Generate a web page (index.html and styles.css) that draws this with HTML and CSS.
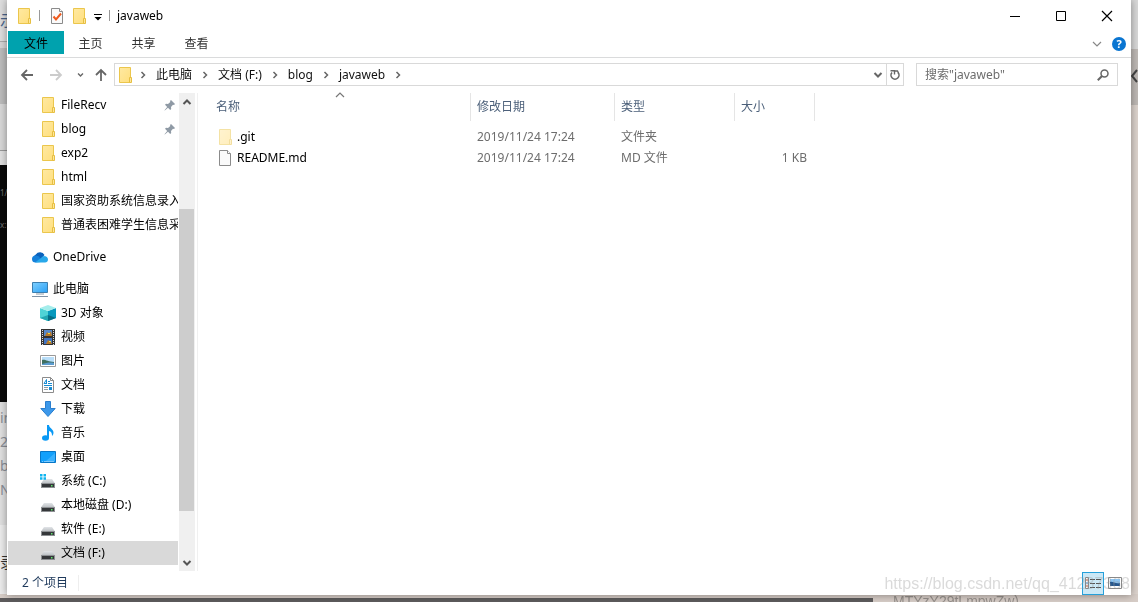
FILE: index.html
```html
<!DOCTYPE html>
<html lang="zh-CN">
<head>
<meta charset="utf-8">
<title>javaweb</title>
<meta name="viewport" content="width=device-width, initial-scale=1">
<link rel="stylesheet" href="styles.css">
</head>
<body>
<svg class="defs" aria-hidden="true">
  <defs>
    <linearGradient id="gf" x1="0" y1="0" x2="1" y2="1"><stop offset="0" stop-color="#ffe9a2"/><stop offset="1" stop-color="#ffdf7d"/></linearGradient>
    <linearGradient id="gs" x1="0" y1="0" x2="1" y2="1"><stop offset="0" stop-color="#7fd0ff"/><stop offset="1" stop-color="#2aa0f5"/></linearGradient>
    <linearGradient id="gd" x1="0" y1="0" x2="0" y2="1"><stop offset="0" stop-color="#e2e5e8"/><stop offset="1" stop-color="#b9bdc1"/></linearGradient>
    <symbol id="folder" viewBox="0 0 16 16"><path d="M2.500.5h11v15h-11z" fill="url(#gf)" stroke="#ebc64c"/><path d="M12.500 15.500v-5h2v5z" fill="#ffe69a" stroke="#e6bf42"/></symbol>
    <symbol id="file" viewBox="0 0 16 16"><path d="M2.500.5h8l3 3v12h-11z" fill="#fafafa" stroke="#8b8b8b"/><path d="M10.500.5v3h3" fill="#fff" stroke="#8b8b8b"/></symbol>
    <symbol id="check" viewBox="0 0 16 16"><use href="#file"/><path d="M4.500 8.500l2.500 3 5-6" fill="none" stroke="#ee5a1e" stroke-width="2"/></symbol>
    <symbol id="pin" viewBox="0 0 12 12"><path d="M7 1l4 4-1 1-1-.3-2 2.300.2 2-1 1L4 8.800.8 11.500.5 11.200 3.200 8 1 5.800l1-1 2 .2L6.300 3 6 2z" fill="#8f9aa5"/></symbol>
    <symbol id="cloud" viewBox="0 0 16 16"><path d="M3 12a4 4 0 0 1 .8-6.500A5 5 0 0 1 12.500 6L8 11z" fill="#0a62bd"/><path d="M3.500 13.500a3.500 3.500 0 0 1 0-7c1.500 0 2.500.5 4 1.500L9 13z" fill="#1580da"/><path d="M3 13.500L11.500 7c3 .2 4.500 1.500 4.500 3.500s-1.300 3-3 3z" fill="#28a8ea"/></symbol>
    <symbol id="pc" viewBox="0 0 16 16"><path d="M.5 1.500h15v10H.5z" fill="url(#gs)" stroke="#3b7fb0"/><path d="M4 13h8" stroke="#8c9aa8"/><path d="M0 15.500h16" stroke="#8093a6"/></symbol>
    <symbol id="cube" viewBox="0 0 16 16"><path d="M0 3l8 3v10l-8-3z" fill="#4fd3d6"/><path d="M16 3L8 6v10l8-3z" fill="#0799bd"/><path d="M0 3l8-3 8 3-8 3z" fill="#a5edeb"/><path d="M0 13l8-3v6z" fill="#22a7b2"/><path d="M8 10l8 3-8 3z" fill="#056f86"/></symbol>
    <symbol id="film" viewBox="0 0 16 16"><path d="M1 0h14v16H1z" fill="#333"/><path d="M4 1h8v6H4z" fill="#5689cc"/><path d="M4 9h8v6H4z" fill="#4274c0"/><path d="M5 7l2-4 2 2 2-3 1 5zM6 15l2-4 3 2 1 2z" fill="#b87928"/><path d="M8 4h2v1H8zM9 12h2v1H9z" fill="#eedc41"/><path d="M2.500 1v15M13.500 1v15" stroke="#ddd" stroke-dasharray="1 1"/></symbol>
    <symbol id="image" viewBox="0 0 16 16"><path d="M.5 2.500h15v11H.5z" fill="#fff" stroke="#999"/><path d="M2 4h12v8H2z" fill="#b9def9"/><path d="M2 7c3-1 6 2 12 2v2H2z" fill="#3f6f60"/><path d="M2 11c4-1 8-2 12-1v2H2z" fill="#5b9bd0"/></symbol>
    <symbol id="doc" viewBox="0 0 16 16"><path d="M2.500.5h8l3 3v12h-11z" fill="#fff" stroke="#8b8b8b"/><path d="M10.500.5v3h3" fill="none" stroke="#8b8b8b"/><path d="M4 6.500l2.500-4v4M4 6.500h3M4 8.500h8M8 4.500h2M8 6.500h4" fill="none" stroke="#188bd2"/><path d="M4 10.500h4M4 12.500h4" stroke="#929da5"/><path d="M9 10h3v3H9z" fill="#188bd2"/></symbol>
    <symbol id="down" viewBox="0 0 16 16"><path d="M5.500.5h5v7h4.700L8 15.500.8 7.500h4.700z" fill="#3c98ea" stroke="#2b7fce"/></symbol>
    <symbol id="note" viewBox="0 0 16 16"><ellipse cx="5.500" cy="13" rx="3.500" ry="2.700" fill="#0a99f5"/><path d="M7 0h2c0 3 4.500 4 4.500 7.500 0 1.500-.5 2.500-1.500 3.500.2-3-1-4.500-3-5v7H7z" fill="#0a99f5"/></symbol>
    <symbol id="desk" viewBox="0 0 16 16"><path d="M.5 2.500h15v11H.5z" fill="#12a0fb" stroke="#0876c6"/><path d="M6 12L15 4v8z" fill="#39b1ff"/><path d="M2 12.500h1M4 12.500h10" stroke="#7cc8fb"/></symbol>
    <symbol id="drive" viewBox="0 0 16 16"><path d="M4 6h8l3 4.500H1z" fill="url(#gd)"/><path d="M1 10h14v5H1z" fill="#8d9093"/><path d="M2 11h12v3H2z" fill="#35373a"/><path d="M11 12h1.500v1.500H11z" fill="#5fe36b"/></symbol>
    <symbol id="sysdrive" viewBox="0 0 16 16"><use href="#drive"/><path d="M0 1h2.500v2.500H0zM3.500 1H6v2.500H3.500zM0 4.300h2.500v2.500H0zM3.500 4.300H6v2.500H3.500z" fill="#10b4ef"/></symbol>
    <symbol id="chev" viewBox="0 0 10 10"><path d="M3.500 2l3 3-3 3" fill="none" stroke="currentColor" stroke-width="1.500"/></symbol>
    <symbol id="vee" viewBox="0 0 10 10"><path d="M1.500 3L5 6.500 8.500 3" fill="none" stroke="currentColor" stroke-width="2"/></symbol>
    <symbol id="thinvee" viewBox="0 0 10 10"><path d="M1 3l4 4 4-4" fill="none" stroke="currentColor" stroke-width="1.200"/></symbol>
    <symbol id="arrow" viewBox="0 0 14 14"><path d="M13 7H2M7 2L2 7l5 5" fill="none" stroke="currentColor" stroke-width="1.800"/></symbol>
  </defs>
</svg>

<div class="desktop" aria-hidden="true">
  <div class="behind-left">
    <span class="frag frag-top">示</span>
    <div class="terminal"><span>1/</span><span>x:</span></div>
    <div class="page-text"><span>in</span><span>2</span><span>be</span><span>Nz</span></div>
    <span class="frag frag-low">录</span>
  </div>
  <div class="behind-right"><div class="pull"><svg viewBox="0 0 8 14"><path d="M7 1L2 7l5 6" fill="none" stroke="#444" stroke-width="2"/></svg></div></div>
  <div class="behind-bottom"><span class="bar"></span><span class="code">MTYzY29tLmpwZw)</span></div>
</div>

<main class="window">
  <header class="titlebar">
    <svg class="icon"><use href="#folder"/></svg>
    <span class="rule"></span>
    <button class="quick" aria-label="属性"><svg class="icon"><use href="#check"/></svg></button>
    <button class="quick" aria-label="新建文件夹"><svg class="icon"><use href="#folder"/></svg></button>
    <button class="more" aria-label="自定义快速访问工具栏"><svg viewBox="0 0 8 8"><path d="M0 1.500h8" stroke="#000"/><path d="M.5 4h7L4 7.500z"/></svg></button>
    <span class="rule rule-last"></span>
    <h1 class="title">javaweb</h1>
    <div class="controls">
      <button aria-label="最小化"><svg viewBox="0 0 12 12"><path d="M1 6.500h10" stroke="#000"/></svg></button>
      <button aria-label="最大化"><svg viewBox="0 0 12 12"><path d="M1.500 1.500h9v9h-9z" fill="none" stroke="#000"/></svg></button>
      <button aria-label="关闭"><svg viewBox="0 0 12 12"><path d="M1 1l10 10M11 1L1 11" stroke="#000" stroke-width="1.200"/></svg></button>
    </div>
  </header>

  <nav class="tabs">
    <button class="tab tab-file">文件</button>
    <button class="tab">主页</button>
    <button class="tab">共享</button>
    <button class="tab">查看</button>
    <div class="tabs-end">
      <button class="expand" aria-label="展开功能区"><svg><use href="#thinvee"/></svg></button>
      <button class="help" aria-label="帮助">?</button>
    </div>
  </nav>

  <div class="navbar">
    <div class="history">
      <button class="back" aria-label="返回"><svg><use href="#arrow"/></svg></button>
      <button class="forward" aria-label="前进" disabled><svg><use href="#arrow"/></svg></button>
      <button class="recent" aria-label="最近浏览的位置"><svg><use href="#vee"/></svg></button>
      <button class="up" aria-label="上移"><svg><use href="#arrow"/></svg></button>
    </div>
    <div class="address">
      <svg class="icon"><use href="#folder"/></svg>
      <svg class="sep"><use href="#chev"/></svg>
      <a href="#">此电脑</a><svg class="sep"><use href="#chev"/></svg>
      <a href="#">文档 (F:)</a><svg class="sep"><use href="#chev"/></svg>
      <a href="#">blog</a><svg class="sep"><use href="#chev"/></svg>
      <a href="#">javaweb</a><svg class="sep"><use href="#chev"/></svg>
      <button class="drop" aria-label="以前的位置"><svg><use href="#vee"/></svg></button>
      <button class="refresh" aria-label="刷新"><svg viewBox="0 0 12 12"><path d="M9 3.500A4 4 0 1 1 3 3.500" fill="none" stroke="currentColor" stroke-width="1.600"/><path d="M1.500 1.800H5.500V5.500M5.500 2H8.500L9.500 4" fill="none" stroke="currentColor" stroke-width="1.400"/></svg></button>
    </div>
    <label class="search">
      <input type="text" aria-label="搜索" placeholder='搜索"javaweb"'>
      <svg viewBox="0 0 12 12"><circle cx="7.500" cy="4.500" r="3.500" fill="none" stroke="currentColor" stroke-width="1.500"/><path d="M5 7L.8 11.200" stroke="currentColor" stroke-width="2"/></svg>
    </label>
  </div>

  <div class="content">
    <aside class="sidebar">
      <ul class="tree">
        <li><a class="node" href="#"><svg class="icon"><use href="#folder"/></svg><span>FileRecv</span><svg class="pin"><use href="#pin"/></svg></a></li>
        <li><a class="node" href="#"><svg class="icon"><use href="#folder"/></svg><span>blog</span><svg class="pin"><use href="#pin"/></svg></a></li>
        <li><a class="node" href="#"><svg class="icon"><use href="#folder"/></svg><span>exp2</span></a></li>
        <li><a class="node" href="#"><svg class="icon"><use href="#folder"/></svg><span>html</span></a></li>
        <li><a class="node" href="#"><svg class="icon"><use href="#folder"/></svg><span>国家资助系统信息录入</span></a></li>
        <li><a class="node" href="#"><svg class="icon"><use href="#folder"/></svg><span>普通表困难学生信息采</span></a></li>
        <li class="group"><a class="node root" href="#"><svg class="icon"><use href="#cloud"/></svg><span>OneDrive</span></a></li>
        <li class="group"><a class="node root" href="#"><svg class="icon"><use href="#pc"/></svg><span>此电脑</span></a></li>
        <li><a class="node" href="#"><svg class="icon"><use href="#cube"/></svg><span>3D 对象</span></a></li>
        <li><a class="node" href="#"><svg class="icon"><use href="#film"/></svg><span>视频</span></a></li>
        <li><a class="node" href="#"><svg class="icon"><use href="#image"/></svg><span>图片</span></a></li>
        <li><a class="node" href="#"><svg class="icon"><use href="#doc"/></svg><span>文档</span></a></li>
        <li><a class="node" href="#"><svg class="icon"><use href="#down"/></svg><span>下载</span></a></li>
        <li><a class="node" href="#"><svg class="icon"><use href="#note"/></svg><span>音乐</span></a></li>
        <li><a class="node" href="#"><svg class="icon"><use href="#desk"/></svg><span>桌面</span></a></li>
        <li><a class="node" href="#"><svg class="icon"><use href="#sysdrive"/></svg><span>系统 (C:)</span></a></li>
        <li><a class="node" href="#"><svg class="icon"><use href="#drive"/></svg><span>本地磁盘 (D:)</span></a></li>
        <li><a class="node" href="#"><svg class="icon"><use href="#drive"/></svg><span>软件 (E:)</span></a></li>
        <li><a class="node selected" href="#"><svg class="icon"><use href="#drive"/></svg><span>文档 (F:)</span></a></li>
      </ul>
      <div class="scrollbar">
        <button class="scroll-up" aria-label="向上滚动"><svg><use href="#vee"/></svg></button>
        <div class="track"><div class="thumb"></div></div>
        <button aria-label="向下滚动"><svg><use href="#vee"/></svg></button>
      </div>
    </aside>
    <section class="files">
      <table>
        <colgroup><col class="c-name"><col class="c-date"><col class="c-type"><col class="c-size"></colgroup>
        <thead><tr><th>名称<svg class="sort"><use href="#thinvee"/></svg></th><th>修改日期</th><th>类型</th><th>大小</th></tr></thead>
        <tbody>
          <tr><td><div class="name"><svg class="icon hidden-item"><use href="#folder"/></svg>.git</div></td><td>2019/11/24 17:24</td><td>文件夹</td><td></td></tr>
          <tr><td><div class="name"><svg class="icon"><use href="#file"/></svg>README.md</div></td><td>2019/11/24 17:24</td><td>MD 文件</td><td class="size">1 KB</td></tr>
        </tbody>
      </table>
    </section>
  </div>

  <footer class="status">
    <span class="count">2 个项目</span>
    <div class="views">
      <button class="view active" aria-label="详细信息"><svg viewBox="0 0 16 12"><path d="M.5.500h3v11h-3z" fill="#fff" stroke="#888"/><path d="M2 2v2M2 8v2" stroke="#d2593a"/><path d="M2 5v2" stroke="#3577b6"/><path d="M5 2.500h5M11 2.500h5M5 6.500h5M11 6.500h5M5 10.500h5M11 10.500h5" stroke="#555"/></svg></button>
      <button class="view" aria-label="大缩略图"><svg viewBox="0 0 14 12"><path d="M.5.500h13v11H.5z" fill="#fff" stroke="#888"/><path d="M2 2h10v7H2z" fill="#8cc6f5"/><path d="M2 5c3-1 5 2 10 1v3H2z" fill="#27588e"/></svg></button>
    </div>
  </footer>
</main>
<div class="watermark">https://blog.csdn.net/qq_41287368</div>
</body>
</html>
```

FILE: styles.css
```css
* { box-sizing: border-box; }
body {
  margin: 0;
  height: 100vh;
  padding: 0 7px 7px;
  overflow: hidden;
  background: #dcdcdc;
  color: #000;
  font: 12px/16px "Noto Sans", "Noto Sans CJK SC", sans-serif;
}
button {
  display: flex;
  align-items: center;
  justify-content: center;
  padding: 0;
  border: 0;
  background: none;
  color: inherit;
  font: inherit;
}
a { color: inherit; text-decoration: none; }
svg { display: block; flex: none; }
.defs { position: absolute; width: 0; height: 0; }
.icon { width: 16px; height: 16px; }

/* Windows lying behind the explorer */
.desktop { position: fixed; inset: 0; }
.behind-left {
  position: absolute;
  inset: 0 auto 0 0;
  width: 24px;
  background: linear-gradient(#dedede 41px, #aaa 41px 42px, #d5d5d5 42px 48px, #bcbcbc 48px 104px, #d8d8d8 104px 150px, #999 150px 151px, #e0e0e0 151px 525px, #ececec 525px);
  color: #8b8e96;
}
.behind-left span { display: block; }
.frag { position: absolute; left: 0; font-size: 15px; line-height: 20px; }
.frag-top { top: 10px; color: #49648c; }
.frag-low { top: 552px; color: #333; }
.terminal {
  position: absolute;
  inset: 165px 0 auto;
  height: 237px;
  padding-top: 20px;
  background: #0a0a0a;
  color: #777;
  font-size: 8px;
}
.terminal span + span { margin-top: 16px; }
.page-text { position: absolute; top: 406px; left: 0; font-size: 14px; line-height: 24px; }
.behind-right {
  position: absolute;
  inset: 0 0 0 auto;
  width: 8px;
  background: linear-gradient(#d8d8d8 49px, #dcd3cd 49px);
}
.pull { margin-top: 49px; height: 56px; padding: 20px 0 0; background: #beb9b5; }
.pull svg { width: 8px; height: 14px; }
.behind-bottom {
  position: absolute;
  inset: auto 0 0 0;
  height: 8px;
  display: flex;
  background: #d6ccc6;
}
.bar { flex: 0 0 873px; margin-top: 4px; background: #5d5b5c; }
.code { padding-left: 20px; color: #96908c; font: 14px/14px "Liberation Sans", sans-serif; }

.window {
  position: relative;
  display: flex;
  flex-direction: column;
  height: 100%;
  background: #fff;
  box-shadow: 0 0 8px rgba(0, 0, 0, .4);
}

.titlebar { display: flex; align-items: center; height: 31px; padding-left: 9px; }
.rule { width: 1px; height: 11px; margin: 0 9px 0 7px; background: #999; }
.quick + .quick { margin-left: 6px; }
.more { margin: 2px 0 0 7px; }
.more svg { width: 8px; height: 8px; }
.rule-last { margin: 0 7px; }
.title { margin: 0; font-size: 12px; font-weight: 400; }
.controls { display: flex; margin: 0 1px 0 auto; }
.controls button { width: 46px; height: 30px; }
.controls svg { width: 12px; height: 12px; }

.tabs {
  display: flex;
  height: 27px;
  padding: 0 5px 3px 1px;
  border-bottom: 1px solid #dadbdc;
}
.tab { width: 53px; padding-top: 2px; color: #333; }
.tab-file { width: 56px; background: #00a2ae; color: #000; }
.tabs-end { display: flex; align-items: center; gap: 10px; margin-left: auto; padding-top: 3px; }
.expand { color: #888; }
.expand svg { width: 10px; height: 10px; }
.help { width: 14px; height: 14px; border-radius: 50%; background: #0a75d1; color: #fff; font-size: 11px; font-weight: 700; line-height: 14px; }

.navbar { display: flex; height: 35px; padding: 5px 13px 7px; color: #666; }
.history { display: flex; align-items: center; width: 94px; }
.history svg { width: 14px; height: 14px; }
.forward { margin-left: 15px; color: #ccc; transform: scaleX(-1); }
.recent { margin-left: 14px; }
.history .recent svg { width: 7px; height: 8px; }
.up { margin-left: 10px; transform: rotate(90deg); }
.address { display: flex; flex: 1; align-items: center; padding-left: 2px; border: 1px solid #d9d9d9; }
.address a { color: #111; }
.sep { width: 10px; height: 10px; margin: 0 8px 0 5px; }
.address a + .sep { margin: 0 8px; }
.drop { margin-left: auto; width: 16px; height: 100%; }
.drop svg { width: 10px; height: 10px; }
.refresh { width: 17px; height: 100%; border-left: 1px solid #d9d9d9; }
.refresh svg { width: 12px; height: 12px; }
.search { display: flex; align-items: center; width: 202px; margin-left: 12px; padding: 0 8px; border: 1px solid #d9d9d9; }
.search input { flex: 1; min-width: 0; padding: 0; border: 0; outline: 0; background: none; font: inherit; }
.search input::placeholder { color: #6d6d6d; opacity: 1; }
.search svg { width: 12px; height: 12px; }

.content { display: flex; flex: 1; min-height: 0; }
.sidebar { display: flex; width: 191px; padding-left: 1px; border-right: 1px solid #f0f0f0; }
.tree { flex: 1; min-width: 0; margin: 0; padding: 0; list-style: none; }
.group { padding-top: 8px; }
.node { display: flex; align-items: center; gap: 5px; height: 24px; padding-left: 32px; overflow: hidden; white-space: nowrap; }
.root { padding-left: 24px; }
.selected { background: #d9d9d9; }
.pin { width: 12px; height: 12px; margin: 0 2px 0 auto; }
.scrollbar { display: flex; flex-direction: column; width: 16px; margin: 0 2px 0 1px; background: #f0f0f0; color: #555; }
.scrollbar button { height: 17px; }
.scrollbar svg { width: 10px; height: 10px; }
.scroll-up svg { transform: scaleY(-1); }
.track { display: flex; flex: 1; flex-direction: column; }
.thumb { width: 15px; height: 68%; margin-top: 99px; background: #cdcdcd; }

.files { flex: 1; min-width: 0; padding-left: 12px; }
table { width: 605px; border-collapse: separate; border-spacing: 0; table-layout: fixed; color: #6d6d6d; }
.c-name { width: 261px; }
.c-date { width: 144px; }
.c-type { width: 120px; }
.c-size { width: 80px; }
th { position: relative; height: 28px; padding: 0 6px; border-right: 1px solid #e5e5e5; color: #4c607a; font-weight: 400; text-align: left; }
.sort { position: absolute; top: -3px; left: 48%; width: 10px; height: 10px; color: #777; transform: scaleY(-1); }
td { height: 21px; padding: 0 8px 0 6px; }
tbody::before { content: ""; display: block; height: 5px; }
.name { display: flex; align-items: center; gap: 4px; padding-left: 1px; color: #000; }
.hidden-item { opacity: .5; }
.size { text-align: right; }

.status { display: flex; align-items: center; height: 24px; padding: 0 5px 0 15px; color: #1e395b; }
.count { padding-right: 10px; border-right: 1px solid #eee; }
.views { display: flex; margin-left: auto; }
.view { width: 22px; height: 23px; border: 1px solid transparent; }
.view svg { width: 14px; height: 12px; }
.active { border-color: #26a0da; background: #cbe8f6; }
.active svg { width: 16px; }

.watermark {
  position: fixed;
  right: 8px;
  bottom: 8px;
  color: rgba(150, 150, 150, .35);
  font: 16px/20px "Liberation Sans", sans-serif;
  pointer-events: none;
}
```
